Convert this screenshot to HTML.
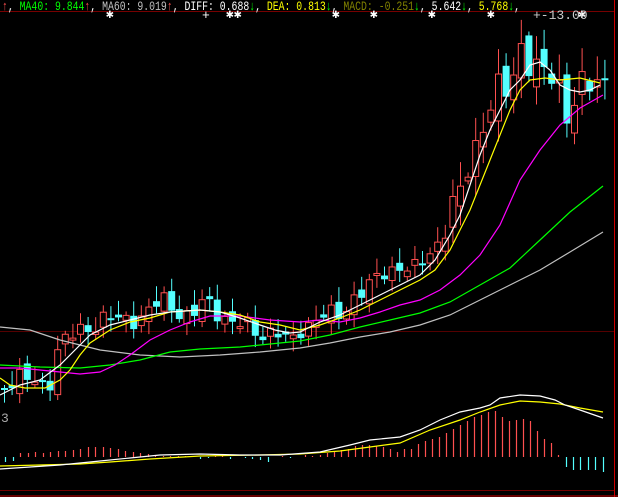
<!DOCTYPE html>
<html><head><meta charset="utf-8"><style>
html,body{margin:0;padding:0;background:#000;width:618px;height:497px;overflow:hidden}
svg{display:block}
text{font-family:"Liberation Mono",monospace;font-size:13px}
</style></head><body>
<svg id="s" width="618" height="497" xmlns="http://www.w3.org/2000/svg">
<rect width="618" height="497" fill="#000"/>
<line x1="0" y1="11.5" x2="614" y2="11.5" stroke="#700" stroke-width="1"/>
<line x1="0" y1="331.5" x2="614" y2="331.5" stroke="#500" stroke-width="1"/>
<line x1="0" y1="490.5" x2="614" y2="490.5" stroke="#700" stroke-width="1"/>
<line x1="614.5" y1="0" x2="614.5" y2="497" stroke="#c00" stroke-width="1"/>
<line x1="0" y1="496" x2="618" y2="496" stroke="#c00" stroke-width="1"/>
<text x="2" y="10" textLength="518" lengthAdjust="spacingAndGlyphs"><tspan fill="#ff5050">↑</tspan><tspan fill="#fff">, </tspan><tspan fill="#00ff00">MA40: 9.844</tspan><tspan fill="#ff5050">↑</tspan><tspan fill="#fff">, </tspan><tspan fill="#c0c0c0">MA60: 9.019</tspan><tspan fill="#ff5050">↑</tspan><tspan fill="#fff">, DIFF: 0.688</tspan><tspan fill="#00ff00">↓</tspan><tspan fill="#fff">, </tspan><tspan fill="#ffff00">DEA: 0.813</tspan><tspan fill="#00ff00">↓</tspan><tspan fill="#fff">, </tspan><tspan fill="#808000">MACD: -0.251</tspan><tspan fill="#00ff00">↓</tspan><tspan fill="#fff">, 5.642</tspan><tspan fill="#00ff00">↓</tspan><tspan fill="#fff">, </tspan><tspan fill="#ffff00">5.768</tspan><tspan fill="#00ff00">↓</tspan><tspan fill="#fff">,</tspan></text>
<g fill="#fff" font-size="10">
<text x="106" y="18">✱</text><text x="202" y="19">+</text><text x="226" y="18">✱✱</text>
<text x="332" y="18">✱</text><text x="370" y="18">✱</text><text x="428" y="18">✱</text><text x="487" y="18">✱</text><text x="578" y="18">✱</text>
</g>
<text x="533" y="19" fill="#ccc" font-size="11">+-13.00</text>
<text x="1" y="422" fill="#aaa" font-size="12">3</text>
<g id="c"></g>
</svg>
<script>
(function(){
var g=document.getElementById('c'),NS='http://www.w3.org/2000/svg';
function el(t,a){var e=document.createElementNS(NS,t);for(var k in a)e.setAttribute(k,a[k]);g.appendChild(e);return e;}
function pl(pts,col){el('polyline',{points:pts.map(function(p){return p.join(',')}).join(' '),fill:'none',stroke:col,'stroke-width':1.2});}
var anc=[[3,385],[20,378],[35,382],[48,388],[55,355],[65,340],[80,330],[95,325],[105,318],[120,320],[140,318],[155,305],[165,300],[175,310],[190,318],[205,300],[215,310],[230,322],[245,326],[260,335],[275,330],[290,345],[300,330],[320,315],[340,316],[355,295],[370,285],[385,272],[400,266],[415,270],[430,252],[440,240],[448,210],[458,203],[468,168],[478,140],[485,112],[492,100],[500,88],[508,95],[515,72],[522,40],[530,62],[540,72],[550,78],[560,92],[567,112],[575,95],[585,80],[592,92],[603,82]];
function interp(x){for(var i=1;i<anc.length;i++){if(x<=anc[i][0]){var a=anc[i-1],b=anc[i];return a[1]+(b[1]-a[1])*(x-a[0])/(b[0]-a[0]);}}return anc[anc.length-1][1];}
var prev=388;
for(var i=0;i<80;i++){var x=4+i*7.6;if(x>605)break;
 var amp=x>440?2.2:1.2;
 var r=(Math.sin(i*2.3)*7+Math.cos(i*1.1)*4)*amp;var c=interp(x)+r*0.8;var o=prev+Math.sin(i*3.7)*5*amp;
 var up=c<o;var bt=Math.min(o,c),bb=Math.max(o,c);if(bb-bt<2)bb=bt+2;
 var hh=bt-3-Math.abs(Math.sin(i*5.1))*10*amp,ll=bb+3+Math.abs(Math.cos(i*4.3))*8*amp;
 var col=up?'#ff5050':'#54ffff';
 el('line',{x1:x+0.5,y1:hh,x2:x+0.5,y2:ll,stroke:col,'stroke-width':1});
 if(up)el('rect',{x:x-2.5,y:bt,width:6,height:bb-bt,fill:'#000',stroke:col,'stroke-width':1});
 else el('rect',{x:x-3,y:bt,width:7,height:bb-bt,fill:col});
 prev=c;}
pl([[0,327],[30,330],[60,340],[100,350],[140,355],[180,357],[220,355],[260,352],[300,348],[330,343],[360,337],[390,332],[420,325],[450,315],[480,300],[510,285],[540,270],[570,252],[603,232]],'#c0c0c0');
pl([[0,365],[40,367],[80,368],[110,365],[140,360],[170,352],[200,349],[240,347],[280,343],[300,341],[330,335],[360,327],[390,320],[420,313],[450,302],[480,285],[510,268],[540,240],[570,212],[603,186]],'#00ff00');
pl([[0,368],[20,368],[40,370],[60,372],[80,374],[100,372],[115,365],[130,355],[150,340],[170,330],[190,322],[210,316],[240,316],[270,320],[300,322],[320,320],[340,322],[360,318],[380,312],[400,305],[420,300],[440,290],[460,275],[480,255],[500,225],[520,180],[540,150],[560,125],[580,108],[603,95]],'#ff00ff');
pl([[0,378],[10,385],[25,388],[45,388],[60,380],[70,370],[80,355],[90,343],[110,330],[130,322],[150,318],[170,312],[200,310],[220,312],[240,315],[260,322],[280,325],[300,330],[320,325],[340,318],[360,310],[380,300],[400,290],[420,280],[435,270],[450,250],[460,230],[470,210],[480,185],[490,160],[500,135],[510,110],[520,90],[530,80],[545,78],[560,80],[580,78],[600,83]],'#ffff00');
pl([[0,395],[20,385],[40,380],[60,365],[75,350],[90,335],[110,325],[130,320],[150,315],[170,312],[200,310],[220,312],[240,318],[260,325],[275,330],[290,333],[300,332],[320,322],[340,315],[360,305],[380,295],[400,285],[420,275],[435,260],[450,235],[460,215],[470,185],[480,155],[490,130],[500,110],[510,90],[520,80],[530,65],[540,62],[550,70],[560,85],[570,90],[580,92],[590,90],[600,85]],'#ffffff');
var z=457;var hist=[[5,5],[13,4],[20,-4],[28,-4],[35,-5],[43,-4],[50,-5],[58,-6],[65,-6],[73,-7],[80,-8],[88,-10],[95,-10],[103,-10],[110,-9],[118,-8],[125,-6],[133,-5],[140,-4],[148,-3],[155,-2],[163,-1],[170,-1],[178,-1],[185,-1],[193,-1],[200,2],[208,1],[215,-1],[222,-2],[230,2],[237,0],[245,1],[252,2],[260,3],[268,5],[275,0],[282,-1],[290,1],[297,0],[305,-2],[312,-1],[320,-2],[327,-4],[334,-5],[341,-7],[348,-8],[355,-11],[362,-12],[369,-12],[376,-11],[383,-10],[390,-8],[397,-5],[404,-8],[411,-8],[418,-13],[425,-16],[432,-18],[439,-20],[446,-24],[453,-28],[460,-32],[467,-36],[474,-40],[481,-42],[488,-45],[495,-46],[502,-40],[509,-36],[516,-37],[523,-38],[530,-36],[537,-26],[544,-18],[551,-14],[558,-2],[566,10],[573,13],[580,13],[588,13],[595,13],[603,15]];
hist.forEach(function(h){el('line',{x1:h[0]+0.5,y1:z,x2:h[0]+0.5,y2:z+h[1],stroke:h[1]<0?'#ff5050':'#54ffff','stroke-width':1.2});});
pl([[0,466],[40,465],[80,464],[110,462],[150,459],[200,456],[260,455],[300,454],[340,451],[370,447],[400,443],[430,430],[460,420],[480,412],[500,405],[520,401],[540,402],[560,404],[580,408],[603,412]],'#ffff00');
pl([[0,469],[30,467],[60,465],[100,461],[130,458],[160,455],[200,454],[240,455],[280,455],[320,452],[350,445],[370,440],[400,437],[420,430],[440,420],[460,412],[480,408],[490,405],[500,398],[520,395],[540,396],[555,400],[565,405],[580,410],[603,418]],'#ffffff');
})();
</script>
</body></html>
